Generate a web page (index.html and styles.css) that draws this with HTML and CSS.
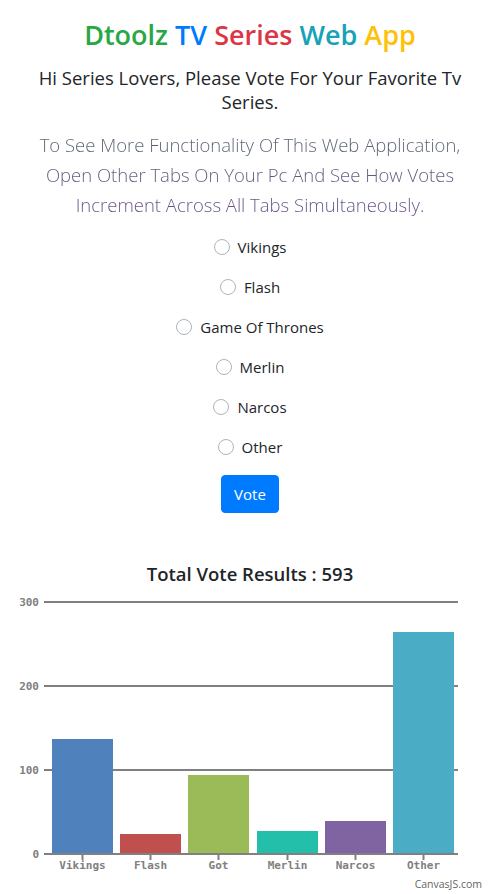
FILE: index.html
```html
<!DOCTYPE html>
<html lang="en">
<head>
<meta charset="utf-8">
<title>Dtoolz TV Series Web App</title>
<link rel="stylesheet" href="styles.css">
</head>
<body>
<main class="app">
  <h1 class="title"><span class="c-green">Dtoolz</span> <span class="c-blue">TV</span> <span class="c-red">Series</span> <span class="c-teal">Web</span> <span class="c-yellow">App</span></h1>
  <h2 class="sub">Hi Series Lovers, Please Vote For Your Favorite Tv Series.</h2>
  <p class="lead">To See More Functionality Of This Web Application, Open Other Tabs On Your Pc And See How Votes Increment Across All Tabs Simultaneously.</p>
  <form class="vote-form">
    <label class="opt"><input type="radio" name="series" class="radio"><span>Vikings</span></label>
    <label class="opt"><input type="radio" name="series" class="radio"><span>Flash</span></label>
    <label class="opt"><input type="radio" name="series" class="radio"><span>Game Of Thrones</span></label>
    <label class="opt"><input type="radio" name="series" class="radio"><span>Merlin</span></label>
    <label class="opt"><input type="radio" name="series" class="radio"><span>Narcos</span></label>
    <label class="opt"><input type="radio" name="series" class="radio"><span>Other</span></label>
    <button type="button" class="btn">Vote</button>
  </form>
  <section class="results">
    <h3 class="chart-title">Total Vote Results : 593</h3>
    <svg class="chart" width="500" height="304" viewBox="0 0 500 304">
      <g class="grid">
        <line x1="44" y1="12" x2="458" y2="12"/>
        <line x1="44" y1="96" x2="458" y2="96"/>
        <line x1="44" y1="180" x2="458" y2="180"/>
      </g>
      <g class="bars">
        <rect x="52" y="149" width="61" height="115" fill="#4F81BC"/>
        <rect x="120" y="244" width="61" height="20" fill="#C0504E"/>
        <rect x="188" y="185" width="61" height="79" fill="#9BBB58"/>
        <rect x="257" y="241" width="61" height="23" fill="#23BFAA"/>
        <rect x="325" y="231" width="61" height="33" fill="#8064A1"/>
        <rect x="393" y="42" width="61" height="222" fill="#4AACC5"/>
      </g>
      <g class="grid">
        <line x1="44" y1="264" x2="458" y2="264"/>
        <line x1="82.5" y1="264" x2="82.5" y2="270"/>
        <line x1="150.5" y1="264" x2="150.5" y2="270"/>
        <line x1="218.5" y1="264" x2="218.5" y2="270"/>
        <line x1="287.5" y1="264" x2="287.5" y2="270"/>
        <line x1="355.5" y1="264" x2="355.5" y2="270"/>
        <line x1="423.5" y1="264" x2="423.5" y2="270"/>
      </g>
      <g class="ylabels">
        <text x="39" y="16">300</text>
        <text x="39" y="100">200</text>
        <text x="39" y="184">100</text>
        <text x="39" y="268">0</text>
      </g>
      <g class="xlabels">
        <text x="82.5" y="279">Vikings</text>
        <text x="150.5" y="279">Flash</text>
        <text x="218.5" y="279">Got</text>
        <text x="287.5" y="279">Merlin</text>
        <text x="355.5" y="279">Narcos</text>
        <text x="423.5" y="279">Other</text>
      </g>
      <text class="credit" x="482" y="298">CanvasJS.com</text>
    </svg>
  </section>
</main>
</body>
</html>
```
FILE: styles.css
```css
html, body {
  margin: 0;
  padding: 0;
  background: #fff;
}

body {
  font-family: "Open Sans", "Noto Sans", sans-serif;
  color: #212529;
}

.app {
  width: 500px;
  display: flex;
  flex-direction: column;
  align-items: center;
  text-align: center;
}

.title {
  margin: 16px 0 0;
  font-size: 27px;
  line-height: 38px;
  font-weight: 600;
}

.c-green { color: #28a745; }
.c-blue { color: #007bff; }
.c-red { color: #dc3545; }
.c-teal { color: #17a2b8; }
.c-yellow { color: #ffc107; }

.sub {
  margin: 12px 0 0;
  padding: 0 30px;
  font-size: 18.5px;
  line-height: 24px;
  font-weight: 400;
}

.lead {
  margin: 16px 0 0;
  padding: 0 20px;
  font-size: 18.5px;
  line-height: 30px;
  font-weight: 300;
  background: linear-gradient(180deg, #56666f 0%, #5f5a7e 55%, #6a4f8c 100%);
  -webkit-background-clip: text;
  background-clip: text;
  color: transparent;
}

.vote-form {
  margin-top: 7px;
  display: flex;
  flex-direction: column;
  align-items: center;
}

.opt {
  height: 40px;
  display: flex;
  align-items: center;
  gap: 8px;
  font-size: 15px;
}

.radio {
  appearance: none;
  -webkit-appearance: none;
  margin: 0;
  width: 16px;
  height: 16px;
  border: 1px solid #adb5bd;
  border-radius: 50%;
  background: #fff;
  box-sizing: border-box;
}

.btn {
  margin-top: 8px;
  height: 38px;
  padding: 0 12px;
  border: 1px solid #007bff;
  border-radius: 4px;
  background: #007bff;
  color: #fff;
  font-family: inherit;
  font-size: 15px;
  line-height: 24px;
}

.results {
  width: 500px;
  margin-top: 49px;
}

.chart-title {
  margin: 0 0 4px;
  font-size: 18.5px;
  line-height: 24px;
  font-weight: 600;
}

.chart {
  display: block;
}

.grid line {
  stroke: #808080;
  stroke-width: 2;
}

.ylabels text {
  font-family: "DejaVu Sans Mono", monospace;
  font-size: 11px;
  font-weight: bold;
  fill: #808080;
  text-anchor: end;
}

.xlabels text {
  font-family: "DejaVu Sans Mono", monospace;
  font-size: 11px;
  font-weight: bold;
  fill: #808080;
  text-anchor: middle;
}

.credit {
  font-family: "Open Sans", sans-serif;
  font-size: 10.5px;
  fill: #666;
  text-anchor: end;
}
```
